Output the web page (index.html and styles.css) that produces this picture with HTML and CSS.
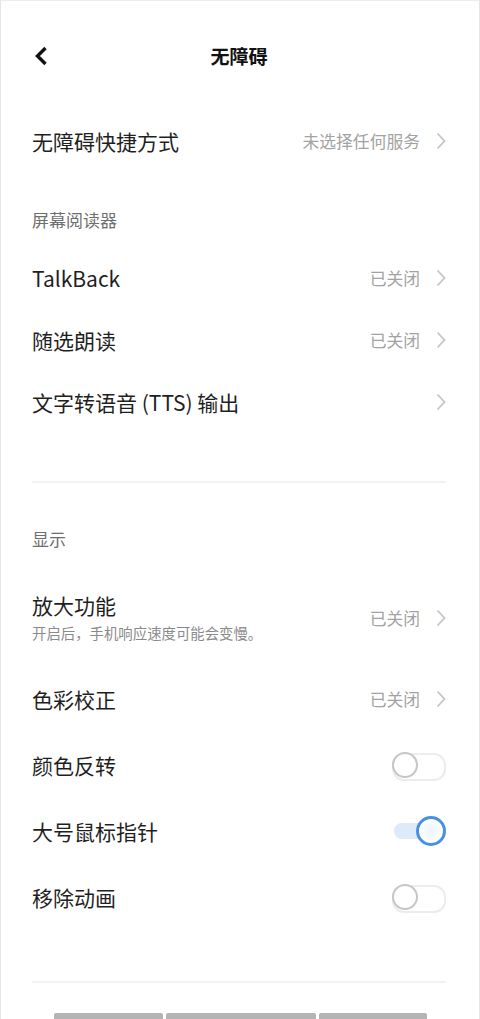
FILE: index.html
```html
<!DOCTYPE html>
<html lang="zh-CN">
<head>
<meta charset="utf-8">
<title>无障碍</title>
<link rel="stylesheet" href="styles.css">
</head>
<body>
<div class="page">
  <header class="topbar">
    <span class="back">
      <svg width="14" height="20" viewBox="0 0 14 20"><path d="M11.5 2 L3.5 10 L11.5 18" fill="none" stroke="#111" stroke-width="3.4" stroke-linejoin="miter"/></svg>
    </span>
    <h1 class="title">无障碍</h1>
  </header>

  <div class="row">
    <span class="label">无障碍快捷方式</span>
    <span class="value">未选择任何服务</span>
    <svg class="chev" width="10" height="18" viewBox="0 0 10 18"><path d="M1.5 1.5 L8.5 9 L1.5 16.5" fill="none" stroke="#c4c4c4" stroke-width="1.8"/></svg>
  </div>

  <div class="section s1">屏幕阅读器</div>
  <div class="row">
    <span class="label">TalkBack</span>
    <span class="value">已关闭</span>
    <svg class="chev" width="10" height="18" viewBox="0 0 10 18"><path d="M1.5 1.5 L8.5 9 L1.5 16.5" fill="none" stroke="#c4c4c4" stroke-width="1.8"/></svg>
  </div>
  <div class="row">
    <span class="label">随选朗读</span>
    <span class="value">已关闭</span>
    <svg class="chev" width="10" height="18" viewBox="0 0 10 18"><path d="M1.5 1.5 L8.5 9 L1.5 16.5" fill="none" stroke="#c4c4c4" stroke-width="1.8"/></svg>
  </div>
  <div class="row">
    <span class="label">文字转语音 (TTS) 输出</span>
    <svg class="chev" width="10" height="18" viewBox="0 0 10 18"><path d="M1.5 1.5 L8.5 9 L1.5 16.5" fill="none" stroke="#c4c4c4" stroke-width="1.8"/></svg>
  </div>

  <div class="divider d1"></div>

  <div class="section s2">显示</div>
  <div class="row tall">
    <div class="texts">
      <span class="label">放大功能</span>
      <span class="sub">开启后，手机响应速度可能会变慢。</span>
    </div>
    <span class="value">已关闭</span>
    <svg class="chev" width="10" height="18" viewBox="0 0 10 18"><path d="M1.5 1.5 L8.5 9 L1.5 16.5" fill="none" stroke="#c4c4c4" stroke-width="1.8"/></svg>
  </div>
  <div class="row r66">
    <span class="label">色彩校正</span>
    <span class="value">已关闭</span>
    <svg class="chev" width="10" height="18" viewBox="0 0 10 18"><path d="M1.5 1.5 L8.5 9 L1.5 16.5" fill="none" stroke="#c4c4c4" stroke-width="1.8"/></svg>
  </div>
  <div class="row r66">
    <span class="label">颜色反转</span>
    <span class="switch off"><span class="knob"></span></span>
  </div>
  <div class="row r66">
    <span class="label">大号鼠标指针</span>
    <span class="switch on"><span class="knob"></span></span>
  </div>
  <div class="row r66">
    <span class="label">移除动画</span>
    <span class="switch off"><span class="knob"></span></span>
  </div>

  <div class="divider d2"></div>

  <div class="bottombars">
    <span class="bar b1"></span>
    <span class="bar b2"></span>
    <span class="bar b3"></span>
  </div>
</div>
</body>
</html>
```
FILE: styles.css
```css
* { box-sizing: border-box; }
html, body {
  margin: 0;
  padding: 0;
  background: #fff;
}
body {
  width: 480px;
  height: 1019px;
  overflow: hidden;
  font-family: "Noto Sans CJK SC", "Noto Sans", sans-serif;
  color: #222;
}
.page {
  width: 480px;
  height: 1019px;
  border-left: 1px solid #e4e4e4;
  border-right: 1px solid #e4e4e4;
  border-top: 1px solid #ececec;
  padding: 0 33px 0 31px;
  overflow: hidden;
}
.topbar {
  height: 109px;
  display: flex;
  align-items: center;
  justify-content: center;
  position: relative;
}
.back {
  position: absolute;
  left: 2px;
  top: 45px;
  display: flex;
}
.title {
  margin: 0;
  font-size: 19px;
  font-weight: 700;
  color: #111;
  line-height: 24px;
}
.row {
  height: 62px;
  display: flex;
  align-items: center;
}
.row.r66 { height: 66px; }
.row.tall {
  height: 89px;
  padding-bottom: 8px;
}
.label {
  font-size: 21px;
  line-height: 28px;
  color: #1f1f1f;
  flex: 1;
}
.texts {
  flex: 1;
  display: flex;
  flex-direction: column;
}
.sub {
  font-size: 14.4px;
  line-height: 22px;
  margin-top: 3px;
  color: #8a8a8a;
}
.value {
  font-size: 16.8px;
  color: #a3a3a3;
  margin-right: 16px;
}
.chev { display: block; flex: none; }
.section {
  font-size: 17px;
  line-height: 24px;
  color: #6e6e6e;
}
.s1 { padding-top: 36px; height: 75px; }
.s2 { padding-top: 44px; height: 94px; }
.divider {
  height: 2px;
  background: #f3f3f3;
}
.d1 { margin-top: 48px; }
.d2 { margin-top: 51px; }
.switch {
  width: 54px;
  height: 30px;
  position: relative;
  flex: none;
}
.switch.off::before {
  content: "";
  position: absolute;
  left: 0;
  right: 0;
  top: 3px;
  height: 24px;
  border: 2px solid #ececec;
  border-radius: 12px;
  background: #fff;
}
.switch.off .knob {
  position: absolute;
  left: 0;
  top: 2px;
  width: 26px;
  height: 26px;
  border-radius: 50%;
  border: 2.5px solid #c6c6c6;
  background: #fff;
}
.switch.on::before {
  content: "";
  position: absolute;
  left: 2px;
  width: 38px;
  top: 7px;
  height: 16px;
  border-radius: 8px;
  background: #dceafa;
}
.switch.on .knob {
  position: absolute;
  right: 0;
  top: 0;
  width: 30px;
  height: 30px;
  border-radius: 50%;
  border: 3px solid #4a90e2;
  background: radial-gradient(circle, #eaf4ff 0, #fff 70%);
}
.bottombars {
  display: flex;
  margin-top: 30px;
  margin-left: 22px;
  gap: 3px;
}
.bar {
  height: 8px;
  background: #b4b4b4;
  border-radius: 2px 2px 0 0;
}
.b1 { width: 109px; }
.b2 { width: 150px; }
.b3 { width: 108px; }
```
